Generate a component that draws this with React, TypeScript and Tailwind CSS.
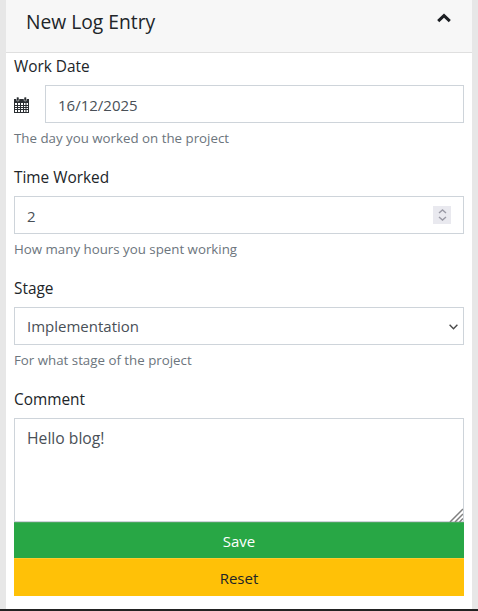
const ff = "font-['Open_Sans','Noto_Sans',sans-serif]";
const control =
  "block w-full h-[38px] bg-white border border-[#ced4da] px-3 pt-[1px] text-[15px] text-[#495057] outline-none";

function Field({ label, help, children }: { label: string; help: string; children: React.ReactNode }) {
  return (
    <div className="mb-4">
      <label className="block h-6 leading-[28px] mb-2 text-[15.4px] text-[#212529]">{label}</label>
      {children}
      <div className="mt-1 h-[21px] leading-[23px] text-[13.3px] text-[#6c757d]">{help}</div>
    </div>
  );
}

export default function App() {
  return (
    <div className={`${ff} h-[611px] w-[478px] overflow-hidden bg-[#e7e7e7] flex flex-col`}>
      <div className="mx-[6px] bg-white h-[609px] flex flex-col">
        <div className="h-[53px] shrink-0 bg-[#f7f7f7] border-b border-[#dfdfdf] pl-5 pr-[21px] flex items-center justify-between">
          <h2 className="text-[19.25px] text-[#212529] pb-[8px]">New Log Entry</h2>
          <svg width="14" height="10" viewBox="0 0 14 10" className="mb-[17px]" fill="none" stroke="#1c1f23" strokeWidth="3">
            <path d="M1.2 8.2L7 2.6l5.8 5.6" />
          </svg>
        </div>
        <div className="px-2">
          <Field label="Work Date" help="The day you worked on the project">
            <div className="flex items-center">
              <div className="w-[31px] shrink-0 pt-[2px]">
                <svg width="15" height="16" viewBox="0 0 15 16" fill="none" stroke="#2b2f33" className="block">
                  <rect x="0.5" y="2.5" width="14" height="13" strokeWidth="1" fill="#fff" />
                  <rect x="0" y="2" width="15" height="4" fill="#2b2f33" stroke="none" />
                  <path d="M0 8.5h15M0 10.5h15M0 12.5h15M3.5 6v9M6.5 6v9M9.5 6v9M12 6v9" strokeWidth="1" />
                  <rect x="2.5" y="0" width="2.5" height="4" rx="1" fill="#2b2f33" stroke="#fff" strokeWidth="0.5" />
                  <rect x="10" y="0" width="2.5" height="4" rx="1" fill="#2b2f33" stroke="#fff" strokeWidth="0.5" />
                </svg>
              </div>
              <input className={control} defaultValue="16/12/2025" readOnly />
            </div>
          </Field>
          <Field label="Time Worked" help="How many hours you spent working">
            <div className="relative">
              <input className={control} defaultValue="2" readOnly />
              <div className="absolute right-[13px] top-[10px] w-[18px] h-[18px] bg-[#e9e9ef] flex items-center justify-center">
                <svg width="11" height="14" viewBox="0 0 11 14" fill="none" stroke="#9a9aa5" strokeWidth="1.4">
                  <path d="M2 5l3.5-3L9 5" />
                  <path d="M2 9l3.5 3L9 9" />
                </svg>
              </div>
            </div>
          </Field>
          <Field label="Stage" help="For what stage of the project">
            <div className="relative">
              <select className={`${control} appearance-none`} defaultValue="Implementation">
                <option>Implementation</option>
              </select>
              <svg width="9" height="6" viewBox="0 0 9 6" fill="none" stroke="#4a4a4a" strokeWidth="1.4" className="absolute right-[6px] top-[17px] pointer-events-none">
                <path d="M0.6 0.8l3.9 3.9 3.9-3.9" />
              </svg>
            </div>
          </Field>
          <div>
            <label className="block h-6 leading-[28px] mb-2 text-[15.4px] text-[#212529]">Comment</label>
            <div className="relative">
              <textarea
                className="block w-full h-[104px] bg-white border border-[#ced4da] px-3 pt-[8px] text-[15.7px] text-[#495057] outline-none resize-none"
                defaultValue="Hello blog!"
                readOnly
              />
              <svg width="14" height="14" viewBox="0 0 14 14" stroke="#808080" strokeWidth="1.5" className="absolute right-[1px] bottom-0 pointer-events-none">
                <path d="M1 14L14 1M6 14l8-8M10.5 14l3.5-3.5" />
              </svg>
            </div>
            <button className="block w-full h-9 bg-[#28a745] border-t border-[#4aa75f] pt-[2px] text-white text-[15px]">Save</button>
            <button className="block w-full h-[38px] bg-[#ffc107] border-t border-[#ffca2c] pt-[1px] text-[#212529] text-[15px]">Reset</button>
          </div>
        </div>
      </div>
      <div className="h-[2px] bg-[#222222] shrink-0" />
    </div>
  );
}
